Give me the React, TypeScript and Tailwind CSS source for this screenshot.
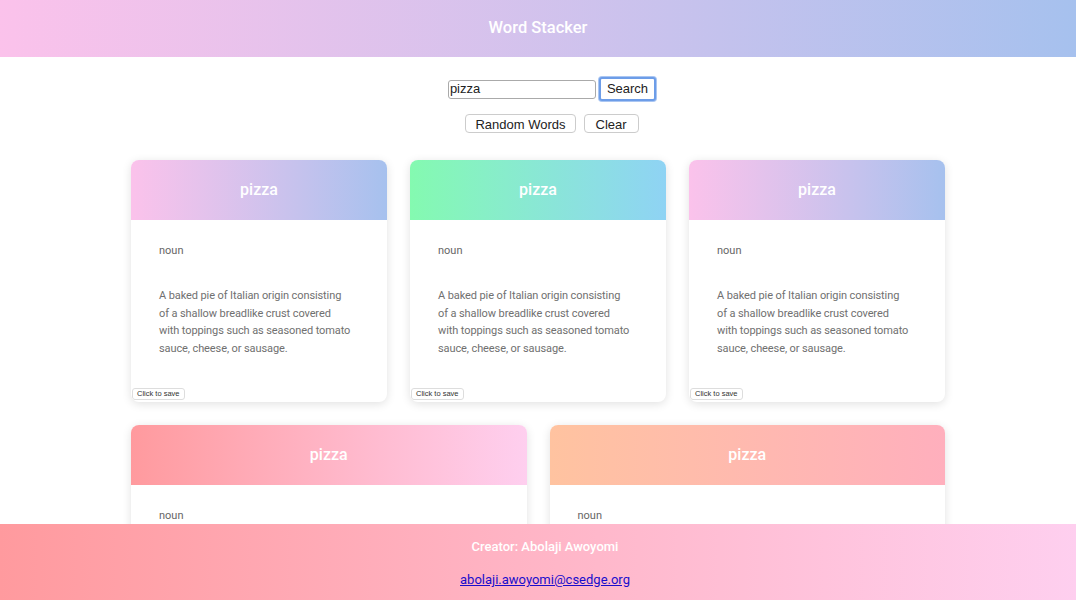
import React from "react";

const lines = [
  "A baked pie of Italian origin consisting",
  "of a shallow breadlike crust covered",
  "with toppings such as seasoned tomato",
  "sauce, cheese, or sausage.",
];

function Card({ grad, wide }: { grad: string; wide?: boolean }) {
  return (
    <div
      className={`${wide ? "basis-[395px]" : "basis-[256px]"} grow h-[242px] flex flex-col rounded-lg bg-white shadow-[0_2px_10px_rgba(0,0,0,0.12)] overflow-hidden`}
    >
      <div className={`h-[60px] shrink-0 flex items-center justify-center ${grad}`}>
        <span className="text-white text-[16px] font-medium">pizza</span>
      </div>
      <div className="flex-1 flex flex-col">
        <div className="px-7 pt-[22px]">
          <p className="text-[11px] leading-[17px] text-[#666]">noun</p>
          <p className="mt-[28px] text-[11px] leading-[17.5px] text-[#707070] tracking-[-0.1px]">
            {lines.map((l) => (
              <span key={l} className="block whitespace-nowrap">
                {l}
              </span>
            ))}
          </p>
        </div>
        <button className="mt-auto self-start ml-[1px] mb-[2px] border border-[#ddd] rounded-[3px] bg-white px-[4px] h-[12px] leading-[10px] text-[7.5px] text-[#333] [font-family:'Liberation_Sans',Arial,sans-serif]">
          Click to save
        </button>
      </div>
    </div>
  );
}

export default function App() {
  return (
    <div className="min-h-screen bg-white [font-family:Roboto,'Noto_Sans',sans-serif] pb-[80px]">
      <header className="h-[57px] flex items-center justify-center bg-gradient-to-r from-[#fbc2eb] to-[#a6c1ee]">
        <h1 className="text-white text-[16.5px] font-medium">Word Stacker</h1>
      </header>
      <div className="flex flex-col items-center pl-[28px] [font-family:'Liberation_Sans',Arial,sans-serif]">
        <div className="mt-[20px] flex items-center gap-[3px]">
          <input
            defaultValue="pizza"
            className="w-[148px] h-[19px] border border-[#aaa] rounded-[3px] px-[1px] text-[13px] text-[#222] outline-none"
          />
          <button className="h-[24px] px-[6px] rounded-[3px] bg-white border-2 border-[#6d9de8] text-[13px] text-[#222] shadow-[0_0_0_1px_#aac6f2]">
            Search
          </button>
        </div>
        <div className="mt-[13px] flex items-center gap-[8px]">
          <button className="h-[19px] px-[9px] rounded-[4px] bg-white border border-[#ccc] text-[13px] text-[#222]">
            Random Words
          </button>
          <button className="h-[19px] px-[11px] rounded-[4px] bg-white border border-[#ccc] text-[13px] text-[#222]">
            Clear
          </button>
        </div>
      </div>
      <div className="mx-auto mt-[27px] w-[814px] flex flex-wrap gap-[23px]">
        <Card grad="bg-gradient-to-r from-[#fbc2eb] to-[#a6c1ee]" />
        <Card grad="bg-gradient-to-r from-[#84fab0] to-[#8fd3f4]" />
        <Card grad="bg-gradient-to-r from-[#fbc2eb] to-[#a6c1ee]" />
        <Card wide grad="bg-gradient-to-r from-[#ff9a9e] to-[#fecfef]" />
        <Card wide grad="bg-gradient-to-r from-[#ffc3a0] to-[#ffafbd]" />
      </div>
      <footer className="fixed bottom-0 left-0 right-0 h-[76px] flex flex-col items-center pl-[14px] bg-gradient-to-r from-[#ff9a9e] to-[#fecfef]">
        <p className="mt-[15px] text-white text-[13px] font-medium leading-[16px]">Creator: Abolaji Awoyomi</p>
        <a href="#" className="mt-[17px] text-[#1a0dcc] underline text-[13px] leading-[16px]">
          abolaji.awoyomi@csedge.org
        </a>
      </footer>
    </div>
  );
}
